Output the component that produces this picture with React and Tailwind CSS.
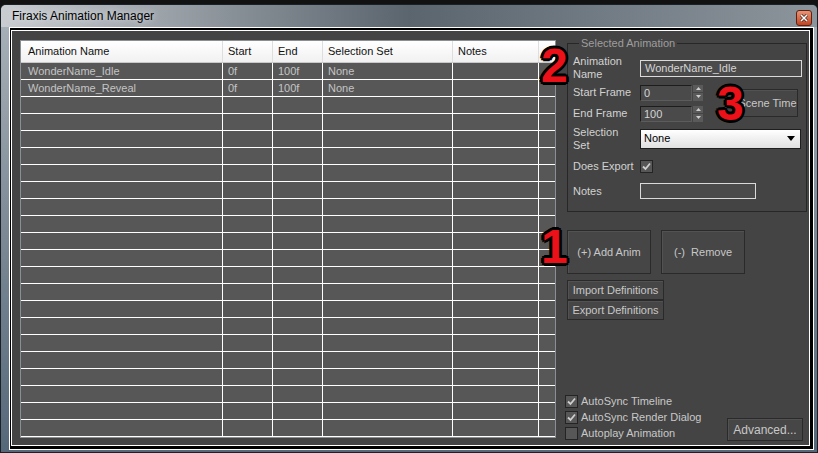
import React from 'react';

const columns = [
  { title: 'Animation Name', w: 'w-[202px]', pl: 'pl-[7px]' },
  { title: 'Start', w: 'w-[50px]', pl: 'pl-[5px]' },
  { title: 'End', w: 'w-[50px]', pl: 'pl-[5px]' },
  { title: 'Selection Set', w: 'w-[130px]', pl: 'pl-[5px]' },
  { title: 'Notes', w: 'w-[86px]', pl: 'pl-[5px]' },
];

const anims = [
  ['WonderName_Idle', '0f', '100f', 'None', ''],
  ['WonderName_Reveal', '0f', '100f', 'None', ''],
];

const rows = Array.from({ length: 22 }, (_, i) => anims[i] || ['', '', '', '', '']);

function Check({ on }) {
  return (
    <div className="w-[13px] h-[13px] border border-[#242424] bg-[#575757] flex items-center justify-center">
      {on && (
        <svg width="9" height="9" viewBox="0 0 9 9">
          <path d="M1 4.5 L3.5 7 L8 1.5" fill="none" stroke="#cfcfcf" strokeWidth="1.8" />
        </svg>
      )}
    </div>
  );
}

function Btn({ className, children }) {
  return (
    <div
      className={`border border-[#2a2a2a] bg-[#464646] shadow-[inset_1px_1px_0_#525252] text-[#c8c8c8] flex items-center justify-center ${className}`}
    >
      {children}
    </div>
  );
}

const redNum =
  'absolute text-[48px] leading-[48px] font-bold text-[#ec1119] [text-shadow:-3px_0_0_#000,3px_0_0_#000,0_-3px_0_#000,0_3px_0_#000,-2px_-2px_0_#000,2px_-2px_0_#000,-2px_2px_0_#000,2px_2px_0_#000]';

export default function App() {
  return (
    <div className="relative w-[818px] h-[453px] overflow-hidden bg-[#121212] pt-[4px] font-['Liberation_Sans',Arial,sans-serif] text-[11px]">
      <div className="h-[449px] border border-[#1b2126] rounded-t-[6px] bg-gradient-to-b from-[#aab3ba] via-[#7d8a96] to-[#55687a] flex flex-col">
        {/* Title bar */}
        <div className="h-[22px] flex items-center justify-between pl-[11px] pr-[5px] bg-gradient-to-r from-[#c9cdd1] via-[#5b656e] to-[#8c959c] rounded-t-[5px]">
          <span className="text-[12px] text-black [text-shadow:0_0_6px_#e8ecef]">Firaxis Animation Manager</span>
          <div className="w-[16px] h-[16px] mt-[4px] rounded-[3px] border border-[#5a2314] bg-gradient-to-b from-[#eb9474] to-[#c2431f] flex items-center justify-center">
            <svg width="8" height="8" viewBox="0 0 8 8">
              <path d="M1 1 L7 7 M7 1 L1 7" stroke="#4a2a20" strokeWidth="3" />
              <path d="M1 1 L7 7 M7 1 L1 7" stroke="#fff" strokeWidth="1.5" />
            </svg>
          </div>
        </div>

        {/* Client area */}
        <div className="ml-[8px] w-[805px] h-[423px] border border-white bg-black pl-[1px] pr-[3px] pt-[2px] pb-[3px]">
          <div className="h-full border border-white bg-[#444444] flex pl-[8px]">
            {/* Animation table */}
            <div className="mt-[9px] w-[536px] h-[398px] border border-[#8a8f94] bg-[#575757] overflow-hidden">
              <div className="h-[22px] flex border-b border-[#c9c9c9] bg-gradient-to-b from-white to-[#f1f1f1] text-[#111]">
                {columns.map((c) => (
                  <div key={c.title} className={`${c.w} ${c.pl} border-r border-[#dedede] flex items-center`}>
                    {c.title}
                  </div>
                ))}
                <div className="flex-1" />
              </div>
              {rows.map((r, i) => (
                <div key={i} className="h-[17px] flex border-b border-white text-[#c4c4c4]">
                  {columns.map((c, j) => (
                    <div key={j} className={`${c.w} ${c.pl} border-r border-white leading-[16px]`}>
                      {r[j]}
                    </div>
                  ))}
                  <div className="flex-1" />
                </div>
              ))}
            </div>

            {/* Right panel */}
            <div className="ml-[9px] w-[241px] flex flex-col pb-[4px]">
              <fieldset className="ml-[2px] mt-[6px] w-[240px] border border-[#272727] pl-[5px] pb-[8px] text-[#d2d2d2]">
                <legend className="ml-[6px] px-[2px] leading-[13px] text-[#9e9e9e]">Selected Animation</legend>
                <div className="pt-[4px]">
                  <div className="h-[28px] flex items-center">
                    <div className="w-[67px] leading-[13px]">
                      Animation
                      <br />
                      Name
                    </div>
                    <div className="w-[162px] h-[17px] border border-[#dadada] bg-[#4b4b4b] pl-[4px] leading-[15px] text-[#d4d4d4]">
                      WonderName_Idle
                    </div>
                  </div>

                  <div className="flex items-center">
                    <div className="flex flex-col">
                      {[
                        ['Start Frame', '0'],
                        ['End Frame', '100'],
                      ].map(([label, val]) => (
                        <div key={label} className="h-[21px] flex items-center">
                          <div className="w-[67px]">{label}</div>
                          <div className="w-[52px] h-[16px] border-t border-l border-[#1d1d1d] border-b border-r border-b-[#5c5c5c] border-r-[#5c5c5c] bg-[#4a4a4a] pl-[3px] leading-[14px] text-[#d4d4d4]">
                            {val}
                          </div>
                          <div className="ml-[1px] w-[10px] h-[16px] flex flex-col gap-[1px]">
                            <div className="flex-1 bg-[#5a5a5a] flex items-center justify-center">
                              <svg width="5" height="3" viewBox="0 0 5 3">
                                <path d="M0 3 L2.5 0 L5 3 Z" fill="#cfcfcf" />
                              </svg>
                            </div>
                            <div className="flex-1 bg-[#5a5a5a] flex items-center justify-center">
                              <svg width="5" height="3" viewBox="0 0 5 3">
                                <path d="M0 0 L2.5 3 L5 0 Z" fill="#cfcfcf" />
                              </svg>
                            </div>
                          </div>
                        </div>
                      ))}
                    </div>
                    <Btn className="ml-[34px] w-[61px] h-[28px]">Scene Time</Btn>
                  </div>

                  <div className="h-[29px] flex items-center">
                    <div className="w-[67px] leading-[13px]">
                      Selection
                      <br />
                      Set
                    </div>
                    <div className="w-[161px] h-[20px] border border-[#1e1e1e] bg-gradient-to-b from-white to-[#e0e0e0] flex items-center justify-between pl-[3px] pr-[5px] text-black">
                      <span>None</span>
                      <svg width="8" height="5" viewBox="0 0 8 5">
                        <path d="M0 0 L8 0 L4 5 Z" fill="#000" />
                      </svg>
                    </div>
                  </div>

                  <div className="h-[26px] flex items-center">
                    <div className="w-[67px]">Does Export</div>
                    <Check on />
                  </div>

                  <div className="h-[24px] flex items-center">
                    <div className="w-[67px]">Notes</div>
                    <div className="w-[116px] h-[16px] border border-[#dadada] bg-[#4b4b4b]" />
                  </div>
                </div>
              </fieldset>

              <div className="ml-[2px] mt-[18px] flex gap-[10px]">
                <Btn className="w-[84px] h-[44px]">(+) Add Anim</Btn>
                <Btn className="w-[84px] h-[44px]">(-)&nbsp; Remove</Btn>
              </div>
              <div className="ml-[2px] mt-[6px] flex flex-col">
                <Btn className="w-[97px] h-[20px]">Import Definitions</Btn>
                <Btn className="w-[97px] h-[20px]">Export Definitions</Btn>
              </div>

              <div className="flex-1" />
              <div className="flex items-end justify-between pr-[3px] text-[#c8c8c8]">
                <div className="flex flex-col">
                  {[
                    ['AutoSync Timeline', true],
                    ['AutoSync Render Dialog', true],
                    ['Autoplay Animation', false],
                  ].map(([label, on]) => (
                    <div key={label} className="h-[16px] flex items-center gap-[3px]">
                      <Check on={on} />
                      <span>{label}</span>
                    </div>
                  ))}
                </div>
                <Btn className="w-[76px] h-[23px] text-[12px]">Advanced...</Btn>
              </div>
            </div>
          </div>
        </div>
      </div>

      {/* Annotation numbers */}
      <div className={`${redNum} left-[541px] top-[42px]`}>2</div>
      <div className={`${redNum} left-[541px] top-[223px]`}>1</div>
      <div className={`${redNum} left-[717px] top-[80px]`}>3</div>
    </div>
  );
}
